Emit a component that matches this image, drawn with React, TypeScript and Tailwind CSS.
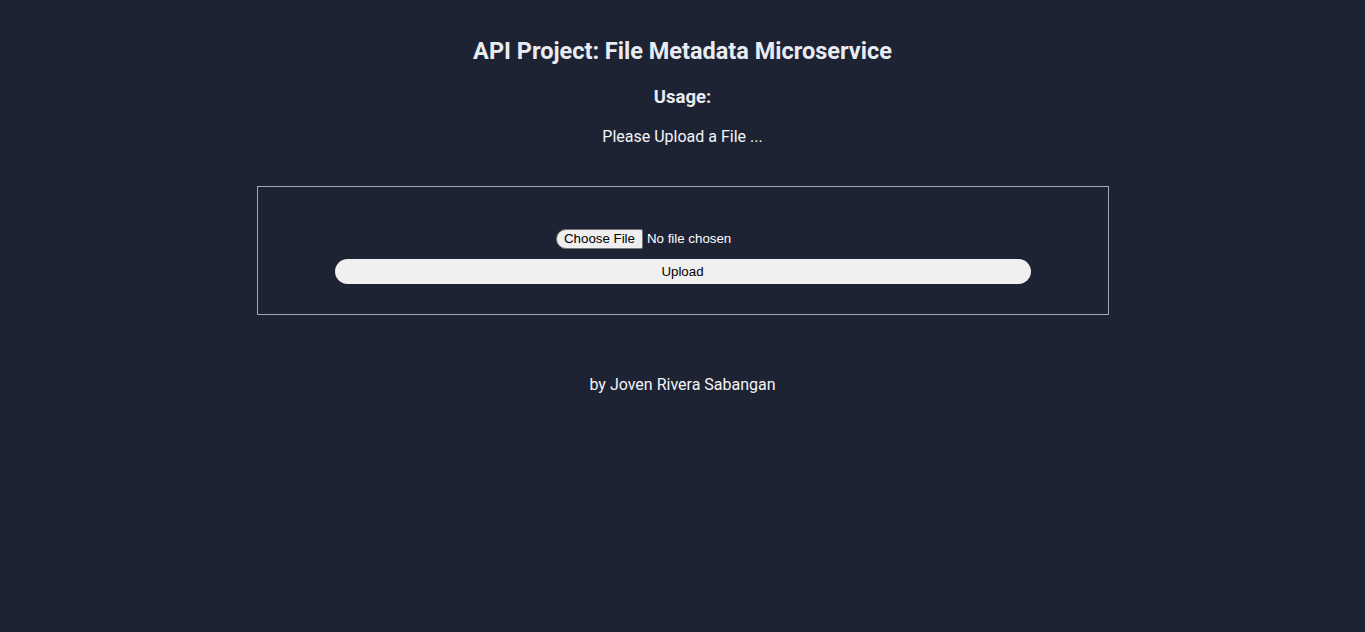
export default function App() {
  return (
    <div className="min-h-[632px] w-full bg-[#1e2333] text-white font-['Roboto',sans-serif]">
      <div className="flex flex-col items-center pt-[37px]">
        <h1 className="text-[23.5px] leading-[28px] font-bold text-[#e8ecf2]">
          API Project: File Metadata Microservice
        </h1>
        <h3 className="mt-[21px] text-[18.5px] leading-[22px] font-bold text-[#e8ecf2]">
          Usage:
        </h3>
        <p className="mt-[19px] text-[16px] leading-[20px] text-[#f2f4f8]">
          Please Upload a File ...
        </p>

        {/* Upload form */}
        <form
          className="mt-[39px] w-[852px] h-[129px] border border-[#a3a7b0] flex flex-col items-center pt-[42px]"
          onSubmit={(e) => e.preventDefault()}
        >
          <div className="w-[253px] flex items-center h-[20px] font-['Liberation_Sans',Arial,sans-serif] text-[13.3px]">
            <span className="h-[20px] px-[7px] flex items-center bg-[#efefef] text-black border border-[#767676] rounded-l-[10px] rounded-r-[2px]">
              Choose File
            </span>
            <span className="ml-[4px] text-white">No file chosen</span>
          </div>
          <button
            type="submit"
            className="mt-[10px] w-[696px] h-[25px] rounded-full bg-[#f0f0f0] text-black text-[13.3px] font-['Liberation_Sans',Arial,sans-serif]"
          >
            Upload
          </button>
        </form>

        <p className="mt-[60px] text-[16px] leading-[20px] text-[#f2f4f8]">
          by Joven Rivera Sabangan
        </p>
      </div>
    </div>
  );
}
